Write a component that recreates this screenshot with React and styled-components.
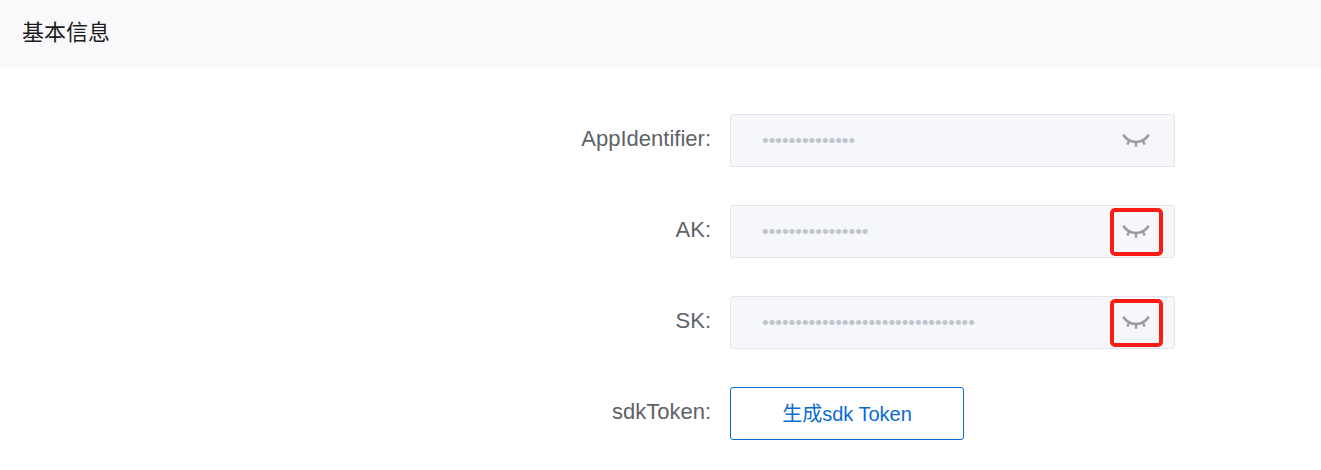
import React, { useState } from "react";
import styled, { createGlobalStyle } from "styled-components";

const GlobalStyle = createGlobalStyle`
  *, *::before, *::after { box-sizing: border-box; }
  body {
    margin: 0;
    background: #fff;
    font-family: "Liberation Sans", Arial, "Noto Sans CJK SC", sans-serif;
  }
`;

const Header = styled.header`
  padding: 17px 22px 19px;
  background: #f9f9fc;
`;

const Title = styled.h1`
  margin: 0;
  font-size: 22px;
  line-height: 32px;
  font-weight: 400;
  color: #1c1c20;
`;

const Form = styled.form`
  display: flex;
  flex-direction: column;
  gap: 38px;
  padding: 46px 0 32px;
`;

const Row = styled.div`
  display: grid;
  grid-template-columns: minmax(0, 21fr) minmax(0, 17fr);
  align-items: start;
`;

const Label = styled.label`
  padding-right: 19px;
  text-align: right;
  font-size: 22px;
  line-height: 50px;
  color: #606266;
`;

const Field = styled.div`
  display: flex;
  align-items: center;
  width: 100%;
  max-width: 445px;
  height: 53px;
  padding-right: 11px;
  border: 1px solid #e2e5ee;
  border-radius: 3px;
  background: #f5f7fb;
`;

const SecretInput = styled.input`
  flex: 1;
  min-width: 0;
  height: 100%;
  padding: 0 0 0 31px;
  border: 0;
  outline: 0;
  background: transparent;
  font-family: "Liberation Sans", Arial, sans-serif;
  font-size: 19px;
  color: #c0c4cc;
`;

const EyeButton = styled.button`
  display: flex;
  align-items: center;
  justify-content: center;
  width: 53px;
  height: 48px;
  padding: 0 2px 0 0;
  border: 4px solid ${(p) => (p.$marked ? "#fc1c13" : "transparent")};
  border-radius: 5px;
  background: transparent;
  color: #9b9b9d;
  cursor: pointer;
`;

const TokenButton = styled.button`
  justify-self: start;
  width: 234px;
  height: 53px;
  padding: 0 0 3px;
  border: 1px solid #0b69d4;
  border-radius: 3px;
  background: #fff;
  font-family: inherit;
  font-size: 20px;
  font-weight: 400;
  color: #0b69d4;
  cursor: pointer;
`;

function ClosedEye() {
  return (
    <svg width="28" height="16" viewBox="0 0 28 16" fill="none" stroke="currentColor" aria-hidden="true">
      <path d="M1.2 1.8C7.6 11.4 20.4 11.4 26.8 1.8" strokeWidth="2.6" />
      <path d="M7.2 7.4 5.4 11.6M14 9v4.8M20.8 7.4l1.8 4.2" strokeWidth="2.4" />
    </svg>
  );
}

function SecretRow({ id, label, secret, marked }) {
  const [shown, setShown] = useState(false);
  return (
    <Row>
      <Label htmlFor={id}>{label}:</Label>
      <Field>
        <SecretInput id={id} type={shown ? "text" : "password"} value={secret} readOnly autoComplete="off" />
        <EyeButton type="button" $marked={marked} aria-label={label} aria-pressed={shown} onClick={() => setShown(!shown)}>
          <ClosedEye />
        </EyeButton>
      </Field>
    </Row>
  );
}

export default function App() {
  return (
    <>
      <GlobalStyle />
      <Header>
        <Title>基本信息</Title>
      </Header>
      <main>
        <Form onSubmit={(e) => e.preventDefault()}>
          <SecretRow id="app-identifier" label="AppIdentifier" secret={"0".repeat(14)} />
          <SecretRow id="ak" label="AK" secret={"0".repeat(16)} marked />
          <SecretRow id="sk" label="SK" secret={"0".repeat(32)} marked />
          <Row>
            <Label htmlFor="sdk-token">sdkToken:</Label>
            <TokenButton id="sdk-token" type="submit">生成sdk Token</TokenButton>
          </Row>
        </Form>
      </main>
    </>
  );
}
